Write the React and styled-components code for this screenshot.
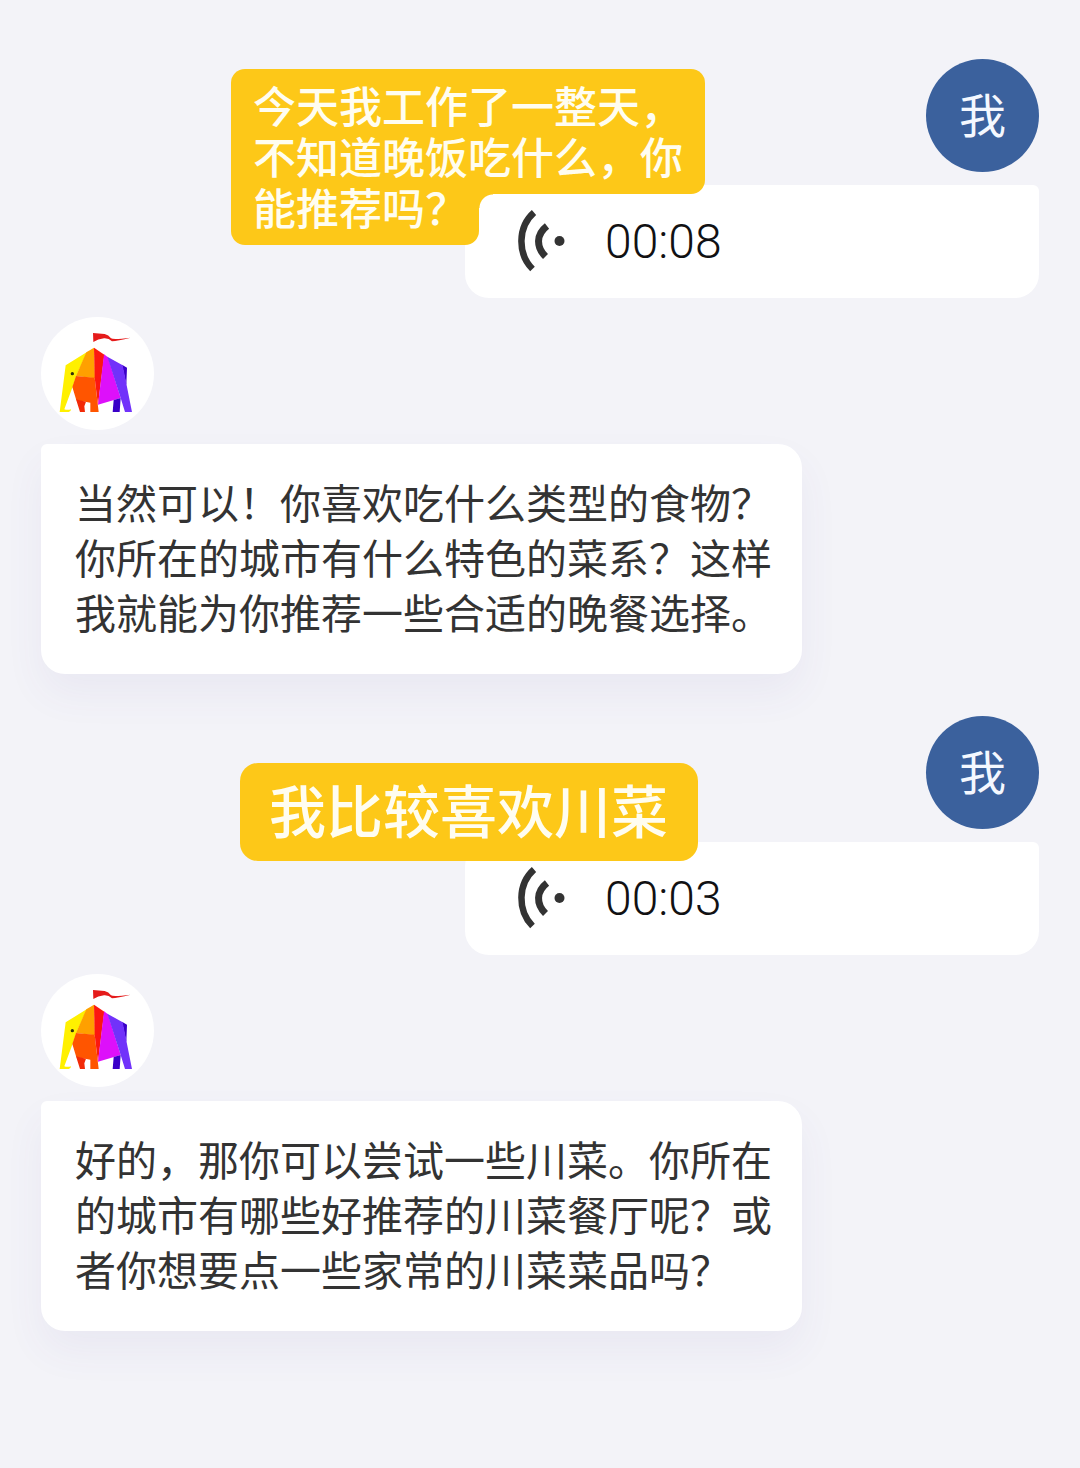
import React from "react";
import styled, { createGlobalStyle } from "styled-components";

const GlobalStyle = createGlobalStyle`
  *, *::before, *::after { box-sizing: border-box; }
  body {
    margin: 0;
    min-height: 100vh;
    background: #f3f3f8;
    font-family: "Noto Sans CJK SC", "Noto Sans", sans-serif;
    color: #333333;
  }
  p { margin: 0; }
`;

const Chat = styled.main`
  display: flex;
  flex-direction: column;
  padding: 59px 41px 136px;
`;

const Message = styled.article`
  position: relative;
  display: flex;
  flex-direction: column;
  align-items: ${(p) => (p.$mine ? "flex-end" : "flex-start")};
  gap: ${(p) => (p.$mine ? 13 : 14)}px;
  margin-bottom: ${(p) => (p.$mine ? 19 : 42)}px;

  &:last-child { margin-bottom: 0; }
`;

const Avatar = styled.div`
  display: flex;
  align-items: center;
  justify-content: center;
  width: 113px;
  height: 113px;
  padding-bottom: ${(p) => (p.$mine ? 6 : 0)}px;
  border-radius: 50%;
  overflow: hidden;
  background: ${(p) => (p.$mine ? "#3b619d" : "#ffffff")};
  color: #f4f8ff;
  font-size: 47px;
  line-height: 56px;

  svg { display: block; width: 100%; height: 100%; }
`;

const TextBubble = styled.div`
  width: 100%;
  max-width: 761px;
  padding: 30px 30px 35px 34px;
  border-radius: 6px 24px 24px 24px;
  background: #ffffff;
  box-shadow: 0 20px 40px rgba(80, 70, 160, 0.06);
  font-size: 41px;
  line-height: 55px;
`;

const VoiceBubble = styled.button`
  display: flex;
  align-items: center;
  gap: 40px;
  width: 100%;
  max-width: 574px;
  height: 113px;
  padding: 0 52px 2px;
  border: 0;
  border-radius: 24px 6px 24px 24px;
  background: #ffffff;
  color: #111113;
  font-family: Roboto, "Noto Sans", sans-serif;
  font-size: 48px;
  font-weight: 300;
  line-height: 56px;
  cursor: pointer;

  svg { display: block; flex: none; }
  span { padding-top: 2px; }
`;

const Caption = styled.p`
  position: absolute;
  z-index: 1;
  color: #fffdf0;
  font-weight: 500;
`;

const ShortCaption = styled(Caption)`
  top: 47px;
  right: 341px;
  padding: 3px 30px 11px 29px;
  border-radius: 18px;
  background: #fdc818;
  font-size: 57px;
  line-height: 84px;
`;

/* Two full lines and a narrow third one, joined by a concave corner. */
const LongCaption = styled(Caption)`
  top: 10px;
  right: 334px;
  width: 474px;
  padding: 10px 22px 13px;
  background: radial-gradient(circle at 100% 100%, transparent 13px, #fdc818 14px)
    248px 125px / 14px 14px no-repeat;
  font-size: 43px;
  line-height: 51px;

  &::before,
  &::after {
    content: "";
    position: absolute;
    z-index: -1;
    left: 0;
    background: #fdc818;
  }
  &::before {
    top: 0;
    right: 0;
    bottom: 51px;
    border-radius: 14px 14px 14px 0;
  }
  &::after {
    bottom: 0;
    width: 248px;
    height: 52px;
    border-radius: 0 0 14px 14px;
  }
`;

function VoiceIcon() {
  return (
    <svg width="48" height="62" viewBox="0 0 48 62" fill="none" aria-hidden="true">
      <path d="M17 2.500C.500 17 .500 44 15.500 59" stroke="#333" strokeWidth="6.500" />
      <path d="M30 16C19 24.500 19 37 28.500 46.500" stroke="#333" strokeWidth="7" />
      <circle cx="42.500" cy="31" r="5" fill="#333" />
    </svg>
  );
}

function Elephant() {
  return (
    <svg viewBox="33 36 339 339" role="img" aria-label="大象">
      <path fill="#e51b1b" d="M189 84 L224 87 Q236 90 243 100 Q250 105 302 98 Q262 108 246 109 Q236 99 222 100 Q204 102 190 111Z" />
      <path fill="#fff000" d="M171 141 L107 181 L89 321 H116 Q123 320 123 313 Q112 316 103 313 L128 245 L140 210Z" />
      <path fill="#ffa000" d="M192 128 L169 142 L138 213 L195 220Z" />
      <path fill="#ff5500" d="M138 213 L194 218 L206 321 H181 V293 L166 290 L139 286 L127 246Z" />
      <path fill="#f22a08" d="M138 283 L168 290 L163 304 L165 321 H150Z" />
      <path fill="#fc1710" d="M192 128 L223 149 L204 300 L194 219Z" />
      <path fill="#dd10fa" d="M222 148 L234 157 L272 279 L204 299Z" />
      <path fill="#3a00c8" d="M276 179 L291 188 L289 240Z M251 285 L272 279 L269 321 H248Z" />
      <path fill="#7132fa" d="M232 155 L278 181 L306 321 H285 L272 279Z" />
      <circle cx="127" cy="206" r="5" fill="#31300c" />
    </svg>
  );
}

function VoiceMessage({ time, children }) {
  return (
    <Message $mine>
      <Avatar $mine>我</Avatar>
      <VoiceBubble type="button">
        <VoiceIcon />
        <span>{time}</span>
      </VoiceBubble>
      {children}
    </Message>
  );
}

function BotMessage({ children }) {
  return (
    <Message>
      <Avatar>
        <Elephant />
      </Avatar>
      <TextBubble>
        <p>{children}</p>
      </TextBubble>
    </Message>
  );
}

export default function App() {
  return (
    <>
      <GlobalStyle />
      <Chat>
        <VoiceMessage time="00:08">
          <LongCaption>今天我工作了一整天，不知道晚饭吃什么，你能推荐吗？</LongCaption>
        </VoiceMessage>
        <BotMessage>
          当然可以！你喜欢吃什么类型的食物？你所在的城市有什么特色的菜系？这样我就能为你推荐一些合适的晚餐选择。
        </BotMessage>
        <VoiceMessage time="00:03">
          <ShortCaption>我比较喜欢川菜</ShortCaption>
        </VoiceMessage>
        <BotMessage>
          好的，那你可以尝试一些川菜。你所在的城市有哪些好推荐的川菜餐厅呢？或者你想要点一些家常的川菜菜品吗？
        </BotMessage>
      </Chat>
    </>
  );
}
